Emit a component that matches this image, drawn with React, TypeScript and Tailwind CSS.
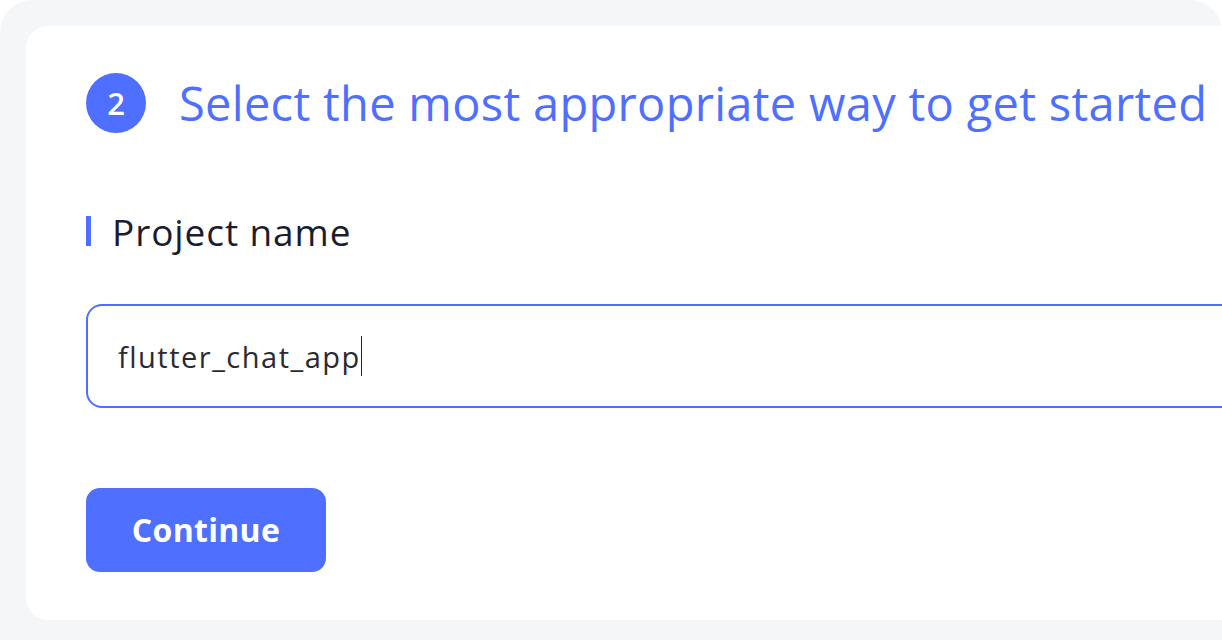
import React from "react";

export default function App() {
  return (
    <div className="w-[1222px] h-[640px] overflow-hidden bg-white" style={{ fontFamily: '"Open Sans", "Liberation Sans", sans-serif' }}>
      <div className="w-[1222px] h-[680px] bg-[#f5f6f8] rounded-t-[32px] pt-[26px] pl-[26px]">
        <div className="w-[1240px] h-[594px] bg-white rounded-[22px] pl-[60px] pt-[47px]">
          <div className="flex items-center h-[60px]">
            <div className="w-[60px] h-[60px] rounded-full bg-[#4e6fff] flex items-center justify-center text-white text-[31px] font-semibold leading-none">2</div>
            <h1 className="ml-[33px] text-[#4e6fff] text-[47px] leading-none tracking-[0.3px] whitespace-nowrap">Select the most appropriate way to get started</h1>
          </div>
          <div className="flex items-center mt-[78px] h-[40px]">
            <div className="w-[5px] h-[30px] bg-[#4e6fff]"></div>
            <div className="ml-[21px] text-[37px] leading-none tracking-[0.9px] text-[#1b1d2e] whitespace-nowrap">Project name</div>
          </div>
          <div className="mt-[53px] w-[1200px] h-[104px] border-2 border-[#4e6fff] rounded-[16px] flex items-center pl-[30px]">
            <span className="text-[29px] text-[#2a2a33] leading-none tracking-[1.5px] whitespace-nowrap">flutter_chat_app</span>
            <span className="w-[1.5px] h-[40px] bg-[#222]"></span>
          </div>
          <button className="mt-[80px] w-[240px] h-[84px] rounded-[14px] bg-[#4e6fff] text-white text-[32px] font-bold tracking-[0.3px] flex items-center justify-center">Continue</button>
        </div>
      </div>
    </div>
  );
}
